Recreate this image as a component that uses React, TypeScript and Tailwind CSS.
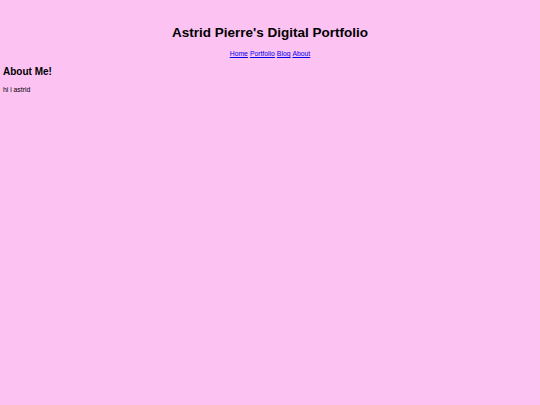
export default function App() {
  return (
    <div className="min-h-[405px] w-[540px] bg-[#fcc2f2] px-[3px] pt-[25px] text-black" style={{ fontFamily: '"Liberation Sans", Arial, sans-serif' }}>
      <h1 className="text-center text-[13.5px] font-bold leading-[15px]">Astrid Pierre's Digital Portfolio</h1>
      <nav className="mt-[10px] flex justify-center gap-[2px] text-[6.8px] leading-[8px]">
        <a href="#" className="text-[#0000ee] underline">Home</a>
        <a href="#" className="text-[#0000ee] underline">Portfolio</a>
        <a href="#" className="text-[#0000ee] underline">Blog</a>
        <a href="#" className="text-[#0000ee] underline">About</a>
      </nav>
      <h2 className="mt-[8px] text-[10px] font-bold leading-[12px]">About Me!</h2>
      <p className="mt-[8px] text-[6.8px] leading-[8px]">hi i astrid</p>
    </div>
  );
}
